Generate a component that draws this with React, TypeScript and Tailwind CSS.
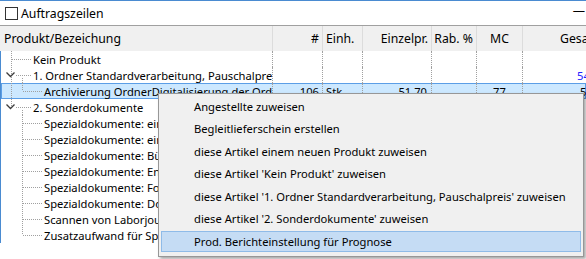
import React from "react";

type Row = {
  text: string;
  level: 0 | 1;
  kind: "l0first" | "l0mid" | "l0last" | "l1mid" | "l1last";
  chevron?: boolean;
  childStart?: boolean;
  selected?: boolean;
  num?: string;
  unit?: string;
  price?: string;
  mc?: string;
  total?: string;
  totalBlue?: boolean;
};

const rows: Row[] = [
  { text: "Kein Produkt", level: 0, kind: "l0first" },
  {
    text: "1. Ordner Standardverarbeitung, Pauschalpreis",
    level: 0,
    kind: "l0mid",
    chevron: true,
    childStart: true,
    total: "54.120,00",
    totalBlue: true,
  },
  {
    text: "Archivierung OrdnerDigitalisierung der Ordner",
    level: 1,
    kind: "l1last",
    selected: true,
    num: "106",
    unit: "Stk.",
    price: "51,70",
    mc: "77",
    total: "5.480,20",
  },
  { text: "2. Sonderdokumente", level: 0, kind: "l0last", chevron: true, childStart: true },
  { text: "Spezialdokumente: einseitig", level: 1, kind: "l1mid" },
  { text: "Spezialdokumente: einzeln", level: 1, kind: "l1mid" },
  { text: "Spezialdokumente: Bücher", level: 1, kind: "l1mid" },
  { text: "Spezialdokumente: Endlospapier", level: 1, kind: "l1mid" },
  { text: "Spezialdokumente: Formate", level: 1, kind: "l1mid" },
  { text: "Spezialdokumente: Doppelseiten", level: 1, kind: "l1mid" },
  { text: "Scannen von Laborjournalen", level: 1, kind: "l1mid" },
  { text: "Zusatzaufwand für Spezialdokumente", level: 1, kind: "l1last" },
];

const menuItems = [
  "Angestellte zuweisen",
  "Begleitlieferschein erstellen",
  "diese Artikel einem neuen Produkt zuweisen",
  "diese Artikel 'Kein Produkt' zuweisen",
  "diese Artikel '1. Ordner Standardverarbeitung, Pauschalpreis' zuweisen",
  "diese Artikel '2. Sonderdokumente' zuweisen",
  "Prod. Berichteinstellung für Prognose",
];

const DOT = "#a0a0a0";

function TreeLines({ row, after }: { row: Row; after: "l0" | "l1" | "none" }) {
  const w = row.level === 0 ? 32 : 43;
  const lines: React.ReactNode[] = [];
  const dash = "1 1";
  if (row.level === 0) {
    const y2 = row.kind === "l0last" ? 8 : 16;
    lines.push(<line key="v0" x1={10.5} y1={0} x2={10.5} y2={y2} stroke={DOT} strokeDasharray={dash} />);
    lines.push(
      <line key="h0" x1={row.chevron ? 15 : 11} y1={8.5} x2={30} y2={8.5} stroke={DOT} strokeDasharray={dash} />
    );
    if (row.childStart) {
      lines.push(<line key="v1s" x1={21.5} y1={11} x2={21.5} y2={16} stroke={DOT} strokeDasharray={dash} />);
    }
    if (row.chevron) {
      lines.push(
        <polyline
          key="ch"
          points="5.5,5.5 9.5,9.5 13.5,5.5"
          fill="none"
          stroke="#3c3c3c"
          strokeWidth={1.3}
        />
      );
    }
  } else {
    if (after === "l0") {
      lines.push(<line key="v0" x1={10.5} y1={0} x2={10.5} y2={16} stroke={DOT} strokeDasharray={dash} />);
    }
    const y2 = row.kind === "l1last" ? 8 : 16;
    lines.push(<line key="v1" x1={21.5} y1={0} x2={21.5} y2={y2} stroke={DOT} strokeDasharray={dash} />);
    lines.push(<line key="h1" x1={22} y1={8.5} x2={42} y2={8.5} stroke={DOT} strokeDasharray={dash} />);
  }
  return (
    <svg width={w} height={16} className="shrink-0" viewBox={`0 0 ${w} 16`}>
      {lines}
    </svg>
  );
}

const cell = "h-full border-r border-dotted border-[#a0a0a0] flex items-center shrink-0 pt-[2px]";
const hcell = "shrink-0 border-r border-[#dcdcdc] flex items-center pt-[2px]";

export default function App() {
  return (
    <div className="relative w-[586px] h-[259px] overflow-hidden bg-white text-[11.2px] text-black font-['Noto_Sans',sans-serif] leading-none">
      {/* top bar */}
      <div className="h-[1px] bg-[#4a8bd1]" />
      <div className="h-[24px] flex items-center pl-[5px] pr-[1px] text-[12.25px]">
        <div className="w-[13px] h-[13px] border border-[#333333] bg-white" />
        <span className="block ml-[3px] pt-[2px]">Auftragszeilen</span>
        <span className="ml-auto translate-y-[-2px]">—</span>
      </div>
      {/* header */}
      <div className="flex h-[26px] border-t border-[#a0a0a0] bg-[#f0f0f0] whitespace-nowrap text-[12.25px]">
        <div className={hcell + " w-[273px] pl-[4px]"}>Produkt/Bezeichung</div>
        <div className={hcell + " w-[50px] justify-end pr-[3px]"}>#</div>
        <div className={hcell + " w-[40px] pl-[3px]"}>Einh.</div>
        <div className={hcell + " w-[69px] justify-end pr-[3px]"}>Einzelpr.</div>
        <div className={hcell + " w-[45px] justify-end pr-[3px]"}>Rab. %</div>
        <div className={hcell + " w-[46px] justify-center"}>MC</div>
        <div className="w-[140px] shrink-0 flex items-center pl-[37px] pt-[2px]">Gesamtpreis</div>
      </div>
      {/* body */}
      <div className="border-l border-[#4a8bd1] whitespace-nowrap">
        {rows.map((r, i) => {
          const inL0 = i > 0 && i < 3;
          return (
            <div
              key={i}
              className={
                "flex h-[16px] " +
                (r.selected ? "bg-[#cce8ff] shadow-[inset_0_0_0_1px_#5b9ee6]" : "")
              }
            >
              <div className="w-[272px] h-full border-r border-dotted border-[#a0a0a0] flex items-center shrink-0 overflow-hidden">
                <TreeLines row={r} after={inL0 ? "l0" : "none"} />
                <span className="block pt-[2px]">{r.text}</span>
              </div>
              <div className={cell + " w-[50px] justify-end pr-[3px]"}>{r.num}</div>
              <div className={cell + " w-[40px] pl-[3px]"}>{r.unit}</div>
              <div className={cell + " w-[69px] justify-end pr-[4px]"}>{r.price}</div>
              <div className={cell + " w-[45px]"} />
              <div className={cell + " w-[46px] justify-center"}>{r.mc}</div>
              <div
                className={
                  "h-full flex items-center shrink-0 w-[140px] pt-[2px] " +
                  (r.totalBlue ? "pl-[54px] text-[#2222ff]" : "pl-[57px]")
                }
              >
                {r.total}
              </div>
            </div>
          );
        })}
      </div>
      {/* context menu */}
      <div className="absolute left-[158px] top-[93px] w-[426px] h-[164px] bg-[#f0f0f0] border border-[#979797] shadow-[2px_2px_3px_rgba(0,0,0,0.35)] pt-[1px] whitespace-nowrap">
        {menuItems.map((m, i) => {
          const hl = i === menuItems.length - 1;
          return (
            <div key={i} className="h-[22.5px] flex items-center px-[2px]">
              <div
                className={
                  "w-full h-[21px] flex items-center pl-[32px] border " +
                  (hl ? "bg-[#c5dcf4] border-[#8fbbe8]" : "border-transparent")
                }
              >
                {m}
              </div>
            </div>
          );
        })}
      </div>
    </div>
  );
}
